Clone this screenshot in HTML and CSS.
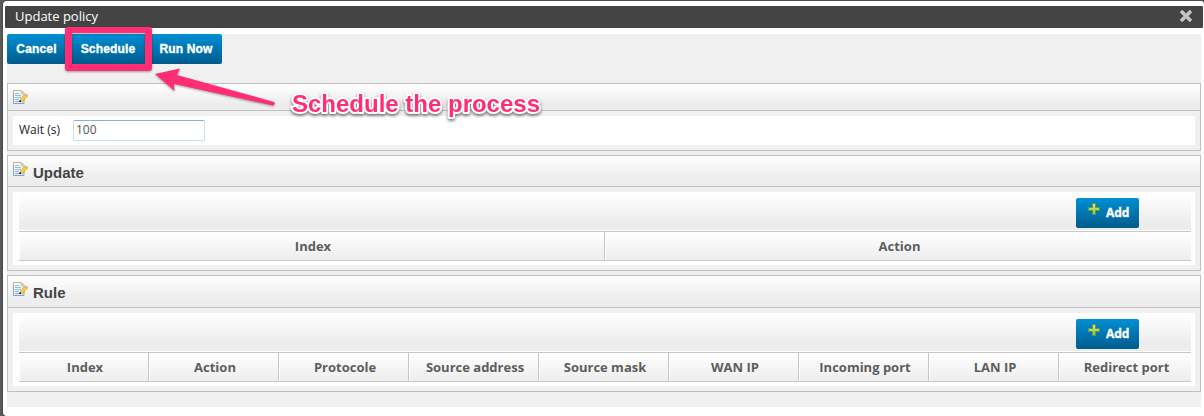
FILE: index.html
```html
<!DOCTYPE html>
<html lang="en">
<head>
<meta charset="utf-8">
<title>Update policy</title>
<link rel="stylesheet" href="styles.css">
</head>
<body>
<svg class="defs" width="0" height="0">
  <defs>
    <linearGradient id="page" x1="0" y1="0" x2="1" y2="1"><stop offset="0" stop-color="#fff"/><stop offset="1" stop-color="#d3e3f5"/></linearGradient>
    <linearGradient id="green" x1="0" y1="0" x2="0" y2="1"><stop offset="0" stop-color="#dcea7a"/><stop offset="1" stop-color="#93bd42"/></linearGradient>
    <symbol id="edit" viewBox="0 0 16 15">
      <path d="M.5.5h7.500l3 3v10H.5z" fill="url(#page)" stroke="#8ba0c6"/>
      <path d="M.5 4V.5h7.500l3 3" fill="none" stroke="#c5b47b"/>
      <path d="M7.500 1v3.500h3.500z" fill="#e9d79c"/>
      <path d="M2 3.500h4M2 5.500h6M2 7.500h6M2 9.500h4M2 11.500h6" stroke="#9db7e0"/>
      <path d="M7 11.500l1-2.700 4.700-4.600 2 1.900-5 4.900z" fill="#fbd23c" stroke="#dca42c" stroke-width=".8"/>
      <path d="M12.700 4l1.700 1.700" stroke="#e8ab62" stroke-width="1.500"/>
      <path d="M6.300 10.500h1.700v1.500H6.300z" fill="#111"/>
    </symbol>
    <symbol id="plus" viewBox="0 0 12 12">
      <path d="M4.500.5h3v4h4v3h-4v4h-3v-4h-4v-3h4z" fill="url(#green)" stroke="#5f9a45"/>
    </symbol>
  </defs>
</svg>
<div class="dialog">
  <header class="titlebar">
    <span>Update policy</span>
    <svg class="close" viewBox="0 0 14 14"><path d="M2 2l10 10M12 2l-10 10" stroke="#c4c4c4" stroke-width="3.600"/></svg>
  </header>
  <main class="content">
    <div class="actions">
      <button class="btn cancel">Cancel</button><button class="btn schedule">Schedule</button><button class="btn run">Run Now</button>
    </div>
    <section class="panel">
      <div class="panel-head plain"><svg class="edit"><use href="#edit"/></svg></div>
      <div class="panel-body">
        <div class="form"><label for="wait">Wait (s)</label><input id="wait" value="100"></div>
      </div>
    </section>
    <section class="panel">
      <div class="panel-head"><svg class="edit"><use href="#edit"/></svg><h2>Update</h2></div>
      <div class="panel-body">
        <div class="grid">
          <div class="toolbar"><button class="btn add"><svg><use href="#plus"/></svg>Add</button></div>
          <div class="columns two"><span>Index</span><span>Action</span></div>
        </div>
      </div>
    </section>
    <section class="panel rule">
      <div class="panel-head"><svg class="edit"><use href="#edit"/></svg><h2>Rule</h2></div>
      <div class="panel-body">
        <div class="grid">
          <div class="toolbar"><button class="btn add"><svg><use href="#plus"/></svg>Add</button></div>
          <div class="columns nine"><span>Index</span><span>Action</span><span>Protocole</span><span>Source address</span><span>Source mask</span><span>WAN IP</span><span>Incoming port</span><span>LAN IP</span><span>Redirect port</span></div>
        </div>
      </div>
    </section>
  </main>
</div>
<svg class="callout" width="1204" height="416" viewBox="0 0 1204 416">
  <g class="pink-shape">
    <path class="frame" fill-rule="evenodd" d="M68 27H149Q152 27 152 30V68Q152 71 149 71H68Q65 71 65 68V30Q65 27 68 27ZM72 33V64H145V33Z"/>
    <path class="arrow" d="M155 74L180 68.500L177 75L274 102Q276 104 273 105.500L174 84L174.500 91Z"/>
  </g>
  <text class="note" x="292" y="112" textLength="248" lengthAdjust="spacingAndGlyphs">Schedule the process</text>
</svg>
</body>
</html>
```
FILE: styles.css
```css
* { box-sizing: border-box; }
body {
  margin: 0;
  height: 416px;
  overflow: hidden;
  padding: 1px 0 0 3px;
  background: #5b5b5b;
  font-family: "Open Sans", sans-serif;
  font-size: 12px;
  color: #222;
}
.defs { position: absolute; }
.dialog {
  height: 415px;
  padding: 5px 1px 0 2px;
  background: #fff;
  border-radius: 4px 3px 0 4px;
  box-shadow: 0 0 2px #222;
}
.titlebar {
  display: flex;
  align-items: flex-start;
  justify-content: space-between;
  height: 22px;
  padding: 0 10px;
  background: #444;
  border-radius: 1px;
  color: #fff;
  font-size: 13px;
}
.titlebar span { line-height: 20px; }
.close { width: 14px; height: 14px; margin-top: 3px; }
.content {
  height: 373px;
  margin: 6px 2px 0;
  background: #f0f0f0;
  width: 1194px;
}
.actions { display: flex; height: 49px; align-items: flex-start; }
.btn {
  height: 30px;
  padding: 0;
  border: 0;
  border-radius: 2px;
  background: linear-gradient(#008fd5, #005b8c);
  color: #fff;
  font: bold 12px "Liberation Sans", Arial, sans-serif;
  letter-spacing: .15px;
  -webkit-text-stroke: .35px #fff;
}
.cancel { width: 59px; }
.schedule { width: 76px; margin-left: 4px; }
.run { width: 72px; margin-left: 4px; }
.panel { margin-bottom: 4px; border: 1px solid #c0c0c0; }
.panel-head {
  display: flex;
  height: 31px;
  padding: 6px 0 0 5px;
  border-bottom: 1px solid #c0c0c0;
  background: linear-gradient(#fff, #ededed 75%, #ededed);
}
.panel-head.plain { height: 27px; }
.rule .panel-head { height: 32px; }
.edit { flex: none; width: 16px; height: 15px; }
h2 {
  margin: 2px 0 0 4px;
  font: bold 15px/18px "Liberation Sans", Arial, sans-serif;
  color: #444;
}
.panel-body { padding: 5px; }
.form {
  display: flex;
  height: 29px;
  padding: 4px 6px 0;
  background: #fff;
}
label { width: 54px; line-height: 20px; }
input {
  width: 132px;
  height: 21px;
  padding: 0 3px 2px 2px;
  border: 1px solid #c5e0f5;
  border-top-color: #85b2da;
  border-radius: 2px;
  outline: 0;
  background: #fff;
  color: #555;
  font: 12px "Open Sans", sans-serif;
}
.grid { height: 73px; padding: 2px 4px 0 6px; background: #fff; }
.toolbar {
  display: flex;
  justify-content: flex-end;
  height: 36px;
  padding: 4px 52px 0 0;
  background: linear-gradient(#fff, #ececec 80%);
}
.rule .grid { padding-top: 1px; }
.rule .toolbar { height: 37px; padding-top: 5px; }
.add {
  display: flex;
  width: 63px;
  padding: 5px 0 0 12px;
  gap: 6px;
  font: bold 12px/20px "Open Sans", sans-serif;
  letter-spacing: 0;
}
.add svg { flex: none; width: 12px; height: 12px; }
.columns {
  display: grid;
  height: 30px;
  margin-top: 1px;
  border-top: 1px solid #c6c6c6;
  border-bottom: 1px solid #c9c9c9;
  background: linear-gradient(#fff, #ededed);
}
.two { grid-template-columns: 586px 1fr; }
.nine { grid-template-columns: repeat(8, 130px) 1fr; }
.columns span {
  border-right: 1px solid #c6c6c6;
  border-left: 1px solid #fff;
  padding-left: 2px;
  text-align: center;
  font-weight: bold;
  font-size: 13px;
  line-height: 28px;
  color: #5d5d5d;
}
.columns span:last-child { border-right: 0; }
.callout { position: absolute; left: 0; top: 0; }
.pink-shape { filter: drop-shadow(0 1.500px 1px rgba(0, 0, 0, .35)); }
.frame, .arrow { fill: #ff2e74; }
.note {
  font: bold 24px "Liberation Sans", Arial, sans-serif;
  fill: #ff2e74;
  stroke: #fff;
  stroke-width: 4px;
  stroke-linejoin: round;
  paint-order: stroke;
  filter: drop-shadow(0 2px 1.500px rgba(0, 0, 0, .5));
}
```
